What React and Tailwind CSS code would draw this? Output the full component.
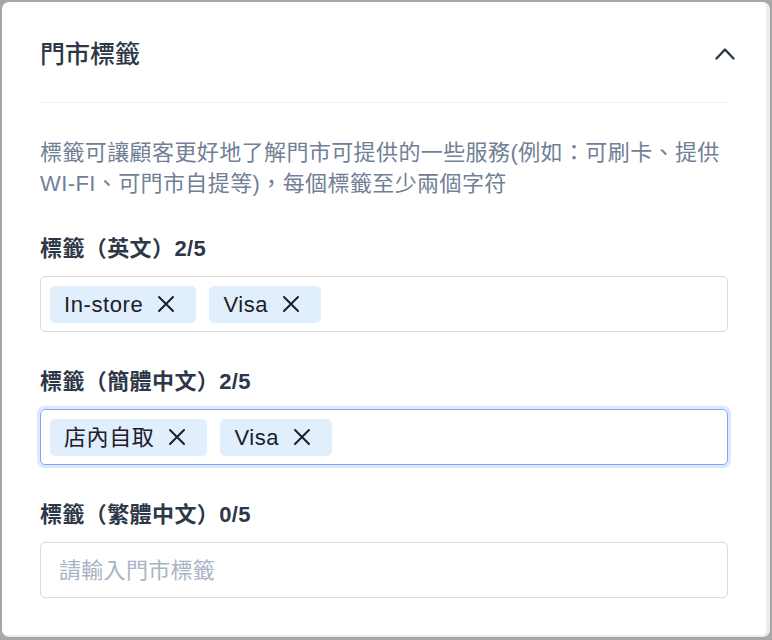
import React from 'react';

const font = { fontFamily: '"Liberation Sans", "Noto Sans CJK TC", sans-serif' };

function CloseIcon() {
  return (
    <svg width="18" height="18" viewBox="0 0 18 18" fill="none" stroke="#1a202c" strokeWidth="2" strokeLinecap="round">
      <path d="M2 2 16 16M16 2 2 16" />
    </svg>
  );
}

function Chip({ label }) {
  return (
    <span className="flex h-[37px] items-center rounded-[5px] bg-[#e1eefb] pl-[14px] pr-[21px] text-[22px] tracking-[0.6px] text-[#1a202c]">
      {label}
      <span className="ml-[14px] flex items-center">
        <CloseIcon />
      </span>
    </span>
  );
}

function TagField({ label, count, tags, focused, placeholder }) {
  return (
    <div className="flex flex-col">
      <p className="mb-[12px] text-[22px] font-bold leading-[31px] tracking-[0.4px] text-[#2d3748]">
        {label}
        {count}
      </p>
      <div
        className={`flex h-[56px] items-center gap-[13px] rounded-[5px] border pl-[9px] ${
          focused ? 'border-[#7da8ef] ring-[3px] ring-[#dce8fc]' : 'border-[#dadada]'
        }`}
      >
        {tags.map((t) => (
          <Chip key={t} label={t} />
        ))}
        {tags.length === 0 && (
          <span className="pl-[9px] text-[22px] tracking-[0.3px] text-[#a9b4c4]">{placeholder}</span>
        )}
      </div>
    </div>
  );
}

export default function App() {
  return (
    <div className="h-[640px] w-[772px] bg-[#a7a7a7] pb-[3px] pl-[2px] pr-[2px] pt-[2px]" style={font}>
      <div className="flex h-full flex-col rounded-[7px] border-b-2 border-r-4 border-[#ececec] bg-white px-[38px]">
        <div className="flex h-[101px] shrink-0 items-center justify-between border-b border-[#edf0f3] pt-[3px]">
          <h2 className="text-[25px] font-medium leading-[32px] text-[#2d3748]">門市標籤</h2>
          <svg className="-mr-[7px]" width="20" height="12" viewBox="0 0 20 12" fill="none" stroke="#2d3748" strokeWidth="2.4" strokeLinecap="round" strokeLinejoin="round">
            <path d="M1.5 10.5 10 1.5l8.5 9" />
          </svg>
        </div>

        <p className="mt-[34px] text-[22px] leading-[31px] tracking-[0.4px] text-[#718096]">
          標籤可讓顧客更好地了解門市可提供的一些服務(例如：可刷卡、提供WI-FI、可門市自提等)，每個標籤至少兩個字符
        </p>

        <div className="mt-[34px] flex flex-col gap-[34px]">
          <TagField label="標籤（英文）" count="2/5" tags={['In-store', 'Visa']} />
          <TagField label="標籤（簡體中文）" count="2/5" tags={['店內自取', 'Visa']} focused />
          <TagField label="標籤（繁體中文）" count="0/5" tags={[]} placeholder="請輸入門市標籤" />
        </div>
      </div>
    </div>
  );
}
